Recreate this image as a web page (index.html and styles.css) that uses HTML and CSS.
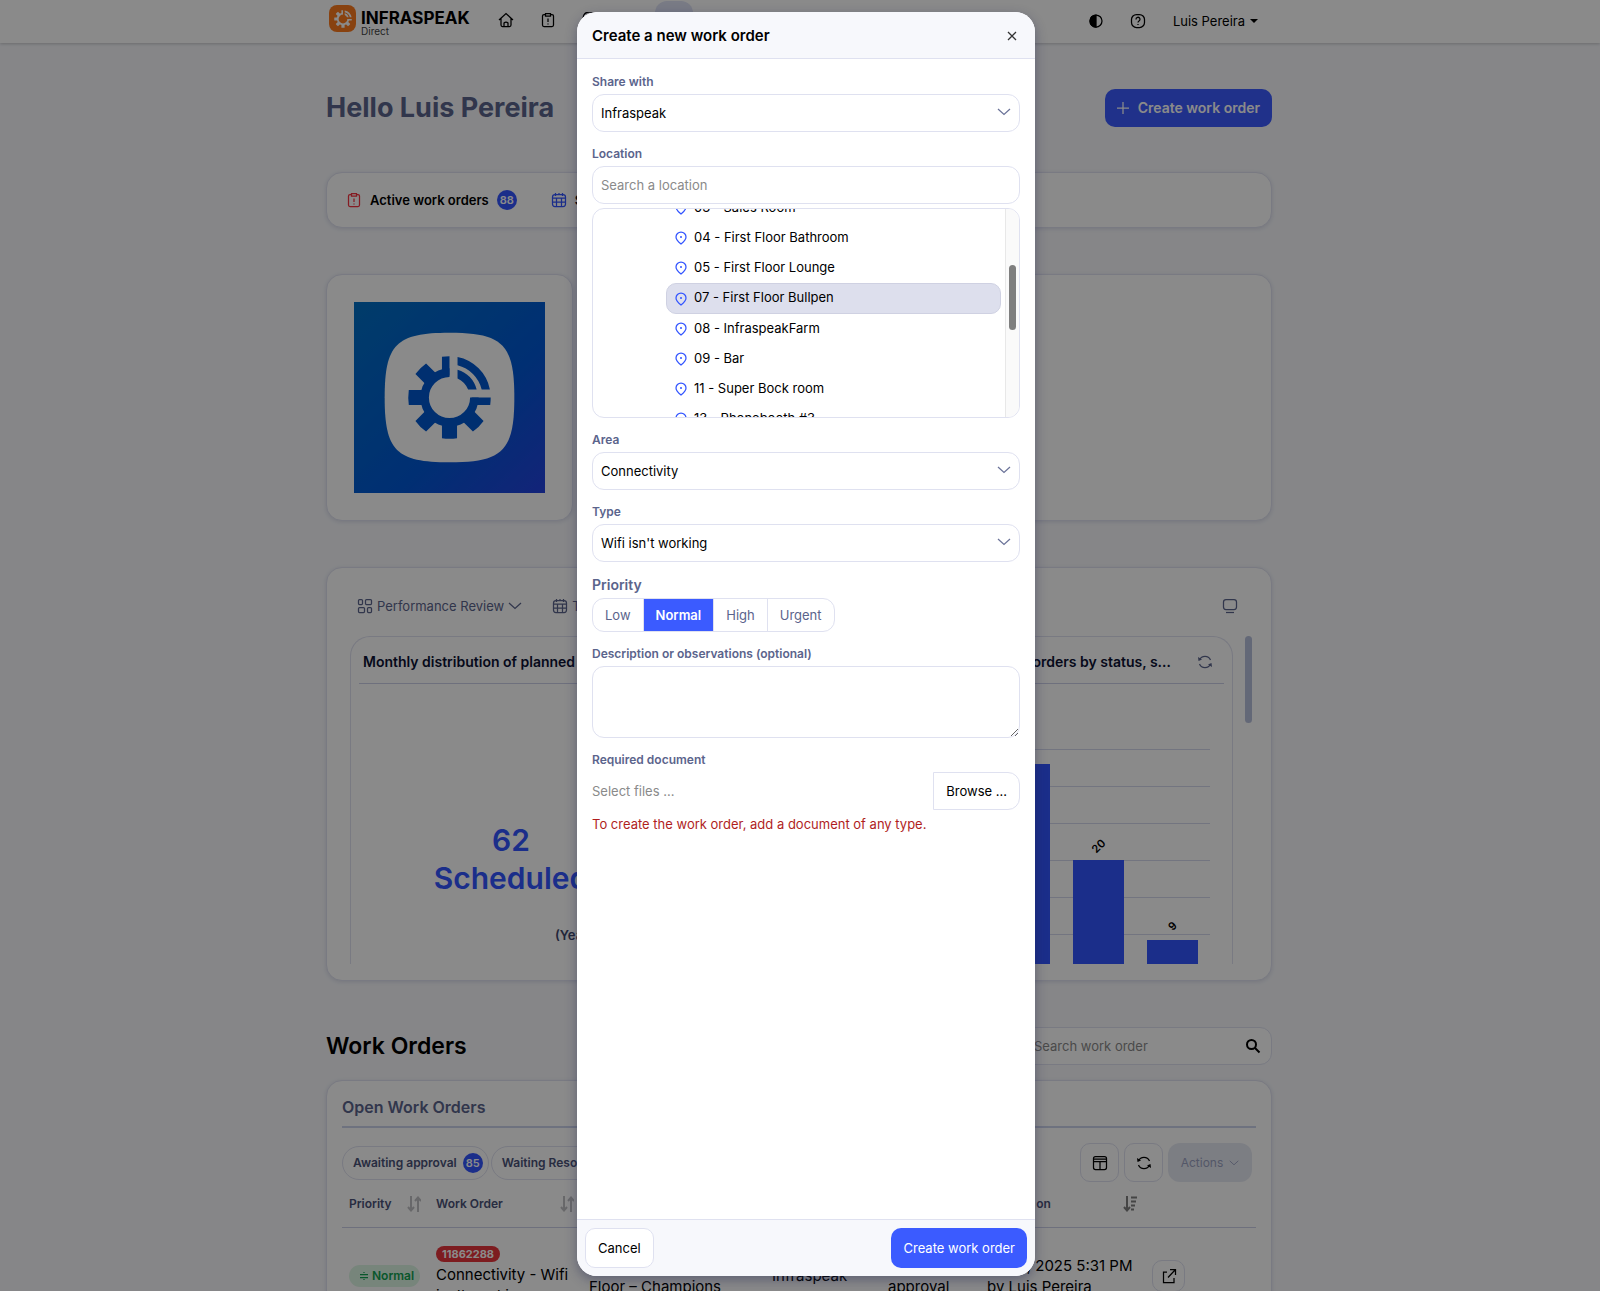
FILE: index.html
```
<!DOCTYPE html>
<html lang="en">
<head>
    <meta charset="UTF-8">
    <meta name="viewport" content="width=device-width, initial-scale=1.0">
    <title>Infraspeak Direct</title>
    <link rel="stylesheet" href="styles.css">
</head>
<body>
    <!-- Shared icons -->
    <svg class="icon-defs" aria-hidden="true">
        <symbol id="gear" viewBox="-42 -42 84 84">
            <path d="M0-20.5A20.500 20.500 0 1 0 20.500 0H29A29 29 0 1 1 0-29Z"/>
            <path d="M-7.500-40.500Q-4-41 0-41V-22H-7.500ZM22 0H41Q41 4 40.500 7.500H22ZM-7.500 24H7.500V40.500Q0 41.500-7.500 40.500ZM-24-7.500V7.500H-40.500Q-41.500 0-40.500-7.500Z"/>
            <path d="M-12.700-23.300-23.300-33.900Q-29.500-29.500-33.900-23.300L-23.300-12.700ZM-12.700 23.300-23.300 33.900Q-29.500 29.500-33.900 23.300L-23.300 12.700ZM12.700 23.300 23.300 33.900Q29.500 29.500 33.900 23.300L23.300 12.700Z"/>
            <path d="M8-40.200A41 41 0 0 1 40.200-8H32A33 33 0 0 0 8-32ZM8-27.500A28.500 28.500 0 0 1 27-8H18.500A20.500 20.500 0 0 0 8-19Z"/>
        </symbol>
        <symbol id="clipboard" viewBox="0 0 16 16">
            <path d="M5.500 2.500H4A1.500 1.500 0 0 0 2.500 4v9A1.500 1.500 0 0 0 4 14.500h8a1.500 1.500 0 0 0 1.500-1.500V4A1.500 1.500 0 0 0 12 2.500h-1.500M5.500 1.500h5v2.500h-5zM8 6.500v3.500M8 11.500v1"/>
        </symbol>
        <symbol id="calendar" viewBox="0 0 16 16">
            <rect x="1.500" y="2.500" width="13" height="12" rx="2.500"/>
            <path d="M1.500 6h13M4.500 1v3M11.500 1v3M8 1v2M1.500 10h13M5.500 6v8.500M10.500 6v8.500"/>
        </symbol>
        <symbol id="refresh" viewBox="0 0 16 16">
            <path d="M2.500 6A6 6 0 0 1 13.500 6M13.500 10A6 6 0 0 1 2.500 10"/>
            <path d="M1 3l.5 4 3.500-1.500zM15 13l-.5-4-3.500 1.500z" fill="currentColor" stroke="none"/>
        </symbol>
        <symbol id="chevron" viewBox="0 0 14 8">
            <path d="M1 1l6 5.500L13 1"/>
        </symbol>
        <symbol id="pin" viewBox="0 0 12 14">
            <path d="M6 1a5 5 0 0 1 5 5c0 3-2.500 5-5 7C3.500 11 1 9 1 6a5 5 0 0 1 5-5z"/>
            <circle cx="6" cy="6" r="1" fill="currentColor" stroke="none"/>
        </symbol>
        <symbol id="sort" viewBox="0 0 14 16">
            <path d="M4 0v13M1 11l3 3.500L7 11M11 16V3M8 5l3-3.500L14 5"/>
        </symbol>
    </svg>

    <div class="app">
        <nav class="navbar">
            <div class="container nav-row">
                <a class="brand" href="#">
                    <span class="brand-mark"><svg><use href="#gear"/></svg></span>
                    <span class="brand-text">
                        <span class="brand-name">INFRASPEAK</span>
                        <span class="brand-sub">Direct</span>
                    </span>
                </a>
                <a class="nav-link" href="#" aria-label="Home">
                    <svg class="icon" viewBox="0 0 16 16"><path d="M1 8l7-6.500L15 8M3 6.500v6.500a1.500 1.500 0 0 0 1.500 1.500h7A1.500 1.500 0 0 0 13 13V6.500M6 14.500V11q2-2 4 0v3.500"/></svg>
                </a>
                <a class="nav-link" href="#" aria-label="Work orders"><svg class="icon"><use href="#clipboard"/></svg></a>
                <a class="nav-link" href="#" aria-label="Assets">
                    <svg class="icon" viewBox="0 0 16 16"><path d="M1 6a6 6 0 0 1 6-6h2a6 6 0 0 1 6 6v8H1z"/></svg>
                </a>
                <a class="nav-link" href="#" aria-label="Calendar"><svg class="icon"><use href="#calendar"/></svg></a>
                <a class="nav-link active" href="#" aria-label="Dashboard"></a>
                <div class="nav-right">
                    <button class="nav-btn" aria-label="Contrast">
                        <svg class="icon" viewBox="0 0 16 16"><circle cx="8" cy="8" r="6"/><path d="M8 2a6 6 0 0 0 0 12z" fill="currentColor"/></svg>
                    </button>
                    <button class="nav-btn" aria-label="Help">
                        <svg class="icon" viewBox="0 0 16 16"><rect x="1.500" y="1.500" width="13" height="13" rx="5"/><path d="M6 6.500a2 2 0 1 1 3 1.500q-1 .600-1 1.500M8 11v1"/></svg>
                    </button>
                    <button class="user-menu">Luis Pereira <span class="caret"></span></button>
                </div>
            </div>
        </nav>

        <main class="container">
            <header class="page-head">
                <h1>Hello Luis Pereira</h1>
                <button class="btn btn-primary btn-create">
                    <svg class="icon-sm" viewBox="0 0 12 12"><path d="M6 0v12M0 6h12"/></svg>
                    Create work order
                </button>
            </header>

            <section class="card summary">
                <span class="summary-item"><svg class="icon red"><use href="#clipboard"/></svg>Active work orders <span class="badge">88</span></span>
                <span class="summary-item"><svg class="icon blue"><use href="#calendar"/></svg>Scheduled</span>
            </section>

            <section class="row-cards">
                <div class="card logo-card">
                    <div class="logo-tile">
                        <svg viewBox="0 0 190 190" role="img" aria-label="Infraspeak">
                            <path d="M95 30.500C148 30.500 159.500 42 159.500 95S148 159.500 95 159.500 30.500 148 30.500 95 42 30.500 95 30.500z" fill="#fff"/>
                            <use href="#gear" x="53" y="53" width="84" height="84" fill="#0058d0"/>
                        </svg>
                    </div>
                </div>
                <div class="card info-card"></div>
            </section>

            <section class="card dash">
                <div class="dash-bar">
                    <button class="dash-btn">
                        <svg class="icon" viewBox="0 0 16 16"><rect x="1.500" y="1.500" width="4" height="5" rx="1"/><rect x="8.500" y="1.500" width="6" height="5" rx="1"/><rect x="1.500" y="9.500" width="6" height="5" rx="1"/><rect x="10.500" y="9.500" width="4" height="5" rx="1"/></svg>
                        Performance Review
                        <svg class="chev"><use href="#chevron"/></svg>
                    </button>
                    <button class="dash-btn"><svg class="icon"><use href="#calendar"/></svg>Today</button>
                    <button class="dash-btn dash-screen" aria-label="Full screen">
                        <svg class="icon" viewBox="0 0 16 16"><rect x="1.500" y="1.500" width="13" height="10" rx="2.500"/><path d="M4 14.500h8"/></svg>
                    </button>
                </div>
                <div class="dash-scroll">
                    <div class="panel">
                        <div class="panel-head">
                            <h3>Monthly distribution of planned jobs</h3>
                            <h3 class="right-title">Work orders by status, s…</h3>
                            <svg class="icon"><use href="#refresh"/></svg>
                        </div>
                        <div class="panel-body">
                            <div class="stat">
                                <strong>62<br>Scheduled</strong>
                                <span>(Year)</span>
                            </div>
                            <div class="chart">
                                <div class="grid-lines"><i></i><i></i><i></i><i></i><i></i><i></i></div>
                                <div class="bars">
                                    <div class="bar" style="height: 200px"></div>
                                    <div class="bar" style="height: 104px"><span>20</span></div>
                                    <div class="bar" style="height: 24px"><span>9</span></div>
                                </div>
                            </div>
                        </div>
                    </div>
                    <div class="dash-thumb"></div>
                </div>
            </section>

            <header class="orders-head">
                <h2>Work Orders</h2>
                <div class="search">
                    <input type="search" placeholder="Search work order" aria-label="Search work order">
                    <svg class="icon" viewBox="0 0 16 16"><circle cx="6.500" cy="6.500" r="4.500"/><path d="M10 10l4.500 4.500"/></svg>
                </div>
            </header>

            <section class="card orders">
                <h3>Open Work Orders</h3>
                <div class="orders-bar">
                    <button class="pill">Awaiting approval <span class="badge">85</span></button>
                    <button class="pill">Waiting Resolution</button>
                    <div class="orders-tools">
                        <button class="tool" aria-label="Columns">
                            <svg class="icon" viewBox="0 0 16 16"><rect x="1.500" y="1.500" width="13" height="13" rx="2"/><path d="M1.500 4h13M1.500 6.500h13M8 6.500v8"/></svg>
                        </button>
                        <button class="tool" aria-label="Refresh"><svg class="icon"><use href="#refresh"/></svg></button>
                        <button class="actions" disabled>Actions <svg class="chev"><use href="#chevron"/></svg></button>
                    </div>
                </div>
                <table>
                    <colgroup>
                        <col class="c-priority"><col class="c-order"><col class="c-location"><col class="c-company"><col class="c-state"><col class="c-created"><col>
                    </colgroup>
                    <thead>
                        <tr>
                            <th><span>Priority <svg><use href="#sort"/></svg></span></th>
                            <th><span>Work Order <svg><use href="#sort"/></svg></span></th>
                            <th>Location</th>
                            <th>Company</th>
                            <th>State</th>
                            <th><span>Created on <svg class="sorted" viewBox="0 0 14 16"><path d="M4 0v13M1 11l3 3.500L7 11M8 1.500h6M8 5.500h5M8 9.500h4M8 13.500h3"/></svg></span></th>
                            <th></th>
                        </tr>
                    </thead>
                    <tbody>
                        <tr>
                            <td><span class="priority"><svg viewBox="0 0 8 8"><path d="M0 2.500h8M0 5.500h8M4 0v1M4 7v1"/></svg>Normal</span></td>
                            <td><span class="code">11862288</span>Connectivity - Wifi<br>isn't working</td>
                            <td>Infraspeak -<br>Porto - First<br>Floor – Champions<br>Room</td>
                            <td>Infraspeak</td>
                            <td>Awaiting<br>approval</td>
                            <td>Jun 4, 2025 5:31 PM<br>by Luis Pereira</td>
                            <td>
                                <a class="open-link" href="#" aria-label="Open">
                                    <svg class="icon" viewBox="0 0 16 16"><path d="M6 4H2.500v10.500H13V10M9 1.500h5.500V7M14 2L7 9.500"/></svg>
                                </a>
                            </td>
                        </tr>
                    </tbody>
                </table>
            </section>
        </main>

        <div class="backdrop">
            <form class="modal" role="dialog" aria-labelledby="modal-title">
                <div class="modal-head">
                    <h2 id="modal-title">Create a new work order</h2>
                    <button type="button" class="close" aria-label="Close">
                        <svg viewBox="0 0 10 10"><path d="M1 1l8 8M9 1L1 9"/></svg>
                    </button>
                </div>
                <div class="modal-body">
                    <div class="field">
                        <label for="share">Share with</label>
                        <div class="select">
                            <select id="share"><option>Infraspeak</option></select>
                            <svg class="chev"><use href="#chevron"/></svg>
                        </div>
                    </div>
                    <div class="field">
                        <label for="location">Location</label>
                        <input id="location" class="control" type="text" placeholder="Search a location">
                        <div class="tree">
                            <ul>
                                <li><svg><use href="#pin"/></svg>03 - Sales Room</li>
                                <li><svg><use href="#pin"/></svg>04 - First Floor Bathroom</li>
                                <li><svg><use href="#pin"/></svg>05 - First Floor Lounge</li>
                                <li class="selected"><svg><use href="#pin"/></svg>07 - First Floor Bullpen</li>
                                <li><svg><use href="#pin"/></svg>08 - InfraspeakFarm</li>
                                <li><svg><use href="#pin"/></svg>09 - Bar</li>
                                <li><svg><use href="#pin"/></svg>11 - Super Bock room</li>
                                <li><svg><use href="#pin"/></svg>13 - Phonebooth #3</li>
                            </ul>
                            <div class="track"><div class="thumb"></div></div>
                        </div>
                    </div>
                    <div class="field">
                        <label for="area">Area</label>
                        <div class="select">
                            <select id="area"><option>Connectivity</option></select>
                            <svg class="chev"><use href="#chevron"/></svg>
                        </div>
                    </div>
                    <div class="field">
                        <label for="type">Type</label>
                        <div class="select">
                            <select id="type"><option>Wifi isn't working</option></select>
                            <svg class="chev"><use href="#chevron"/></svg>
                        </div>
                    </div>
                    <fieldset class="field">
                        <legend>Priority</legend>
                        <div class="segmented">
                            <label><input type="radio" name="priority">Low</label>
                            <label><input type="radio" name="priority" checked>Normal</label>
                            <label><input type="radio" name="priority">High</label>
                            <label><input type="radio" name="priority">Urgent</label>
                        </div>
                    </fieldset>
                    <div class="field">
                        <label for="description">Description or observations (optional)</label>
                        <textarea id="description" class="control"></textarea>
                    </div>
                    <div class="field">
                        <label for="document">Required document</label>
                        <div class="file-row">
                            <span>Select files ...</span>
                            <label class="browse" for="document">Browse ...</label>
                            <input id="document" type="file">
                        </div>
                        <p class="error">To create the work order, add a document of any type.</p>
                    </div>
                </div>
                <div class="modal-foot">
                    <button type="button" class="btn btn-light">Cancel</button>
                    <button type="submit" class="btn btn-primary">Create work order</button>
                </div>
            </form>
        </div>
    </div>
</body>
</html>
```

FILE: styles.css
```
* {
    box-sizing: border-box;
}

body {
    margin: 0;
    background-color: #fff;
    color: #000;
    font-family: Inter, "Liberation Sans", sans-serif;
    font-size: 13px;
    line-height: 20px;
}

h1, h2, h3, p, ul, fieldset {
    margin: 0;
    padding: 0;
}

button, input, select, textarea {
    font: inherit;
    color: inherit;
}

button {
    display: flex;
    align-items: center;
    justify-content: center;
    padding: 0;
    border: 0;
    background: none;
    white-space: nowrap;
}

a {
    color: inherit;
    text-decoration: none;
}

svg {
    flex: none;
    fill: none;
    stroke: currentColor;
    stroke-width: 1.25;
}

.icon-defs {
    position: absolute;
    width: 0;
    height: 0;
}

.icon {
    width: 16px;
    height: 16px;
}

.icon-sm {
    width: 12px;
    height: 12px;
}

.chev {
    width: 14px;
    height: 8px;
}

.red {
    color: #f5333f;
}

.blue {
    color: #3355ff;
}

.app {
    position: relative;
    height: calc(100vh - 4px);
    padding-right: 2px;
    overflow: hidden;
    background-color: #f7f8fc;
}

.container {
    max-width: 946px;
    margin: 0 auto;
}

.card {
    background-color: #fff;
    border: 1px solid #dfe1f0;
    border-radius: 16px;
    box-shadow: 0 1px 4px rgba(60, 70, 120, 0.15);
}

/* Navbar */
.navbar {
    margin-right: -2px;
    padding-right: 2px;
    background-color: #fff;
    box-shadow: 0 1px 3px rgba(0, 0, 0, 0.2);
}

.nav-row {
    display: flex;
    gap: 4px;
    height: 43px;
    padding: 1px 8px 3px 3px;
}

.brand {
    display: flex;
    gap: 5px;
    width: 154px;
    padding-top: 4px;
}

.brand-mark {
    display: flex;
    align-items: center;
    justify-content: center;
    width: 27px;
    height: 27px;
    border-radius: 8px;
    background-color: #fb7a1e;
}

.brand-mark svg {
    width: 18px;
    height: 18px;
    fill: #fff;
    stroke: none;
}

.brand-text {
    display: flex;
    flex-direction: column;
    padding-top: 4px;
}

.brand-name {
    font-size: 17px;
    font-weight: 700;
    line-height: 18px;
}

.brand-sub {
    color: #444;
    font-size: 10px;
    line-height: 9px;
}

.nav-link, .nav-btn {
    display: flex;
    align-items: center;
    justify-content: center;
    width: 38px;
    height: 38px;
    border-radius: 12px;
}

.nav-link.active {
    background-color: #dfe3f6;
}

.nav-right {
    display: flex;
    align-items: center;
    gap: 4px;
    margin-left: auto;
    padding-right: 6px;
}

.user-menu {
    gap: 5px;
    padding-left: 12px;
}

.caret {
    border: 4px solid transparent;
    border-top-color: #000;
    border-bottom: 0;
}

/* Page heading */
.page-head {
    display: flex;
    align-items: center;
    justify-content: space-between;
    padding-top: 46px;
}

.page-head h1 {
    color: #5b648c;
    font-size: 27px;
    font-weight: 700;
    line-height: 38px;
}

.btn {
    height: 38px;
    padding: 0 12px;
    border-radius: 10px;
}

.btn-primary {
    background-color: #3b5bff;
    color: #fff;
}

.btn-create {
    gap: 9px;
    font-size: 14px;
    font-weight: 600;
}

/* Summary */
.summary {
    display: flex;
    gap: 34px;
    margin-top: 45px;
    padding: 17px 19px;
}

.summary-item {
    display: flex;
    align-items: center;
    gap: 8px;
    font-weight: 600;
}

.badge {
    width: 20px;
    border-radius: 10px;
    background-color: #3355ff;
    color: #fff;
    font-size: 11px;
    font-weight: 600;
    line-height: 20px;
    text-align: center;
}

/* Logo and info cards */
.row-cards {
    display: flex;
    gap: 16px;
    margin-top: 46px;
}

.logo-card {
    padding: 27px;
}

.logo-tile {
    width: 191px;
    height: 191px;
    background: linear-gradient(135deg, #006fc4, #0058d4 60%, #2442e0);
}

.logo-tile svg {
    display: block;
    stroke: none;
}

.info-card {
    flex: 1;
}

/* Dashboard */
.dash {
    margin-top: 46px;
    padding: 28px 19px 16px 23px;
}

.dash-bar {
    display: flex;
    gap: 30px;
    padding: 0 14px 0 7px;
    color: #5b648c;
}

.dash-btn {
    gap: 4px;
}

.dash-screen {
    margin-left: auto;
}

.dash-scroll {
    display: flex;
    gap: 12px;
    height: 348px;
    padding-top: 20px;
}

.dash-thumb {
    width: 7px;
    height: 87px;
    border-radius: 4px;
    background-color: #b8c0dc;
}

.panel {
    flex: 1;
    padding: 0 8px;
    overflow: hidden;
    border: 1px solid #dfe1f0;
    border-bottom: 0;
    border-radius: 20px 20px 0 0;
}

.panel-head {
    display: flex;
    align-items: center;
    height: 47px;
    padding: 4px 11px 0 4px;
    border-bottom: 1px solid #ccd0e8;
    color: #5b648c;
}

.panel-head h3 {
    color: #0c1233;
    font-size: 14px;
    font-weight: 600;
}

.panel-head .right-title {
    margin-left: auto;
    margin-right: 26px;
}

.panel-body {
    display: flex;
    justify-content: space-between;
    padding: 65px 14px 0 4px;
}

.stat {
    display: flex;
    flex-direction: column;
    width: 296px;
    padding-top: 72px;
    text-align: center;
}

.stat strong {
    color: #3355ff;
    font-size: 30px;
    font-weight: 600;
    line-height: 38px;
}

.stat span {
    padding: 28px 0 0 192px;
    color: #3d456b;
    font-weight: 600;
    text-align: left;
}

.chart {
    position: relative;
    width: 380px;
    height: 215px;
}

.grid-lines {
    display: flex;
    flex-direction: column;
    gap: 36px;
}

.grid-lines i {
    height: 1px;
    background-color: #d5d9ec;
}

/* Bars stand in front of the grid lines */
.bars {
    position: absolute;
    inset: 0 12px 0 0;
    display: flex;
    align-items: flex-end;
    justify-content: flex-end;
    gap: 23px;
}

.bar {
    width: 51px;
    background-color: #3355ff;
    text-align: center;
}

.bar span {
    display: block;
    margin-top: -24px;
    font-size: 11px;
    font-weight: 600;
    transform: rotate(-45deg);
}

/* Work orders */
.orders-head {
    display: flex;
    align-items: center;
    justify-content: space-between;
    margin-top: 46px;
}

.orders-head h2 {
    font-size: 23px;
    font-weight: 600;
}

.search {
    display: flex;
    align-items: center;
    width: 252px;
    height: 38px;
    padding: 0 10px 0 13px;
    border: 1px solid #dfe1f0;
    border-radius: 12px;
    background-color: #fff;
}

.search input {
    flex: 1;
    min-width: 0;
    padding: 0;
    border: 0;
    background: none;
}

.search svg {
    stroke-width: 2;
}

::placeholder {
    color: #8a8a8a;
    opacity: 1;
}

.orders {
    height: 400px;
    margin-top: 15px;
    padding: 16px 15px;
}

.orders h3 {
    padding-bottom: 9px;
    border-bottom: 2px solid #ccd3ea;
    color: #5b648c;
    font-size: 16px;
    font-weight: 600;
}

.orders-bar {
    display: flex;
    align-items: center;
    gap: 2px;
    padding: 15px 4px 0 0;
}

.pill {
    gap: 6px;
    height: 34px;
    padding: 0 5px 0 10px;
    border: 1px solid #dfe1f0;
    border-radius: 17px;
    color: #4a5278;
    font-size: 12px;
    font-weight: 600;
}

.orders-tools {
    display: flex;
    gap: 5px;
    margin-left: auto;
}

.tool {
    width: 39px;
    height: 39px;
    border: 1px solid #dfe1f0;
    border-radius: 10px;
}

.actions {
    gap: 6px;
    width: 84px;
    height: 39px;
    border-radius: 12px;
    background-color: #e6e9f3;
    color: #9aa1c0;
    font-size: 12px;
}

.actions .chev {
    width: 10px;
}

table {
    width: 100%;
    table-layout: fixed;
    border-collapse: collapse;
}

.c-priority { width: 87px; }
.c-order { width: 153px; }
.c-location { width: 183px; }
.c-company { width: 116px; }
.c-state { width: 99px; }
.c-created { width: 165px; }

th {
    height: 45px;
    padding: 0 8px 0 7px;
    border-bottom: 1px solid #ccd0e8;
    color: #4a5278;
    font-size: 12px;
    font-weight: 600;
    text-align: left;
}

th span {
    display: flex;
    align-items: center;
    justify-content: space-between;
}

th svg {
    width: 14px;
    height: 16px;
    color: #c0c0c4;
    stroke-width: 2;
}

th .sorted {
    color: #808080;
}

td {
    padding: 6px 7px;
    font-size: 15px;
    line-height: 21px;
    white-space: nowrap;
}

.priority {
    display: flex;
    align-items: center;
    gap: 4px;
    width: 71px;
    height: 22px;
    padding-left: 11px;
    border-radius: 11px;
    background-color: #dcf5e4;
    color: #12a150;
    font-size: 12px;
    font-weight: 600;
}

.priority svg {
    width: 8px;
    height: 8px;
}

.code {
    display: block;
    width: 64px;
    margin-bottom: 2px;
    border-radius: 8px;
    background-color: #e8343c;
    color: #fff;
    font-size: 11px;
    font-weight: 700;
    line-height: 16px;
    text-align: center;
}

.open-link {
    display: flex;
    align-items: center;
    justify-content: center;
    width: 33px;
    height: 32px;
    border: 1px solid #dfe1f0;
    border-radius: 10px;
}

/* Modal */
.backdrop {
    position: absolute;
    inset: 0;
    display: flex;
    justify-content: center;
    padding: 12px 0 15px 12px;
    background-color: rgba(0, 0, 0, 0.46);
}

.modal {
    display: flex;
    flex-direction: column;
    width: 458px;
    overflow: hidden;
    border-radius: 20px;
    background-color: #fff;
    box-shadow: 0 4px 12px rgba(30, 35, 80, 0.4);
}

.modal-head {
    display: flex;
    align-items: center;
    justify-content: space-between;
    height: 47px;
    padding: 1px 18px 0 15px;
    border-bottom: 1px solid #dfe1f0;
    background-color: #f7f8fc;
}

.modal-head h2 {
    font-size: 15px;
    font-weight: 600;
}

.close svg {
    width: 10px;
    height: 10px;
    color: #333;
}

.modal-body {
    display: flex;
    flex: 1;
    flex-direction: column;
    gap: 14px;
    padding: 15px;
}

.field {
    display: flex;
    flex-direction: column;
    gap: 4px;
    min-width: 0;
    border: 0;
}

.field > label {
    color: #5b648c;
    font-size: 12px;
    font-weight: 600;
    line-height: 16px;
}

.field legend {
    padding: 0 0 4px;
    color: #5b648c;
    font-size: 14px;
    font-weight: 600;
    line-height: 18px;
}

.control, .select select {
    width: 100%;
    height: 38px;
    padding: 0 8px;
    border: 1px solid #dfe1f0;
    border-radius: 12px;
    background-color: #fff;
}

.select {
    position: relative;
}

.select select {
    display: block;
    appearance: none;
}

.select .chev {
    position: absolute;
    top: 14px;
    right: 9px;
    color: #6b7399;
    pointer-events: none;
}

.control#description {
    display: block;
    height: 72px;
    resize: vertical;
}

.tree {
    display: flex;
    height: 210px;
    overflow: hidden;
    border: 1px solid #dfe1f0;
    border-radius: 12px;
}

/* List is scrolled part of the way down */
.tree ul {
    flex: 1;
    margin-top: -16px;
    padding: 0 4px 0 73px;
    list-style: none;
}

.tree li {
    display: flex;
    align-items: center;
    gap: 7px;
    height: 30px;
    padding: 0 8px 3px;
    border: 1px solid transparent;
    border-radius: 10px;
}

.tree li.selected {
    height: 31px;
    border-color: #cfd1e2;
    background-color: #dddfed;
}

.tree li svg {
    width: 12px;
    height: 14px;
    margin-top: 3px;
    color: #3355ff;
}

.track {
    width: 14px;
    padding: 56px 3px 0;
    border-left: 1px solid #e8e8e8;
    background-color: #fafafa;
}

.thumb {
    width: 7px;
    height: 65px;
    border-radius: 4px;
    background-color: #7f7f7f;
}

.segmented {
    display: flex;
    width: fit-content;
    height: 34px;
    overflow: hidden;
    border: 1px solid #dfe1f0;
    border-radius: 12px;
    color: #5b648c;
}

.segmented label {
    padding: 6px 12px;
    border-right: 1px solid #dfe1f0;
}

.segmented label:last-child {
    border-right: 0;
}

.segmented label:has(:checked) {
    background-color: #3b5bff;
    color: #fff;
    font-weight: 600;
}

.segmented input, .file-row input {
    position: absolute;
    width: 1px;
    height: 1px;
    margin: 0;
    opacity: 0;
}

.file-row {
    display: flex;
    align-items: center;
    justify-content: space-between;
    color: #8a8a8a;
}

.browse {
    height: 38px;
    padding: 8px 12px;
    border: 1px solid #dfe1f0;
    border-radius: 0 12px 12px 0;
    color: #000;
}

.error {
    color: #b01e1e;
}

.modal-foot {
    display: flex;
    justify-content: space-between;
    padding: 8px;
    border-top: 1px solid #dfe1f0;
    background-color: #f7f8fc;
}

.modal-foot .btn {
    height: 40px;
}

.btn-light {
    border: 1px solid #dfe1f0;
    background-color: #fff;
}
```
